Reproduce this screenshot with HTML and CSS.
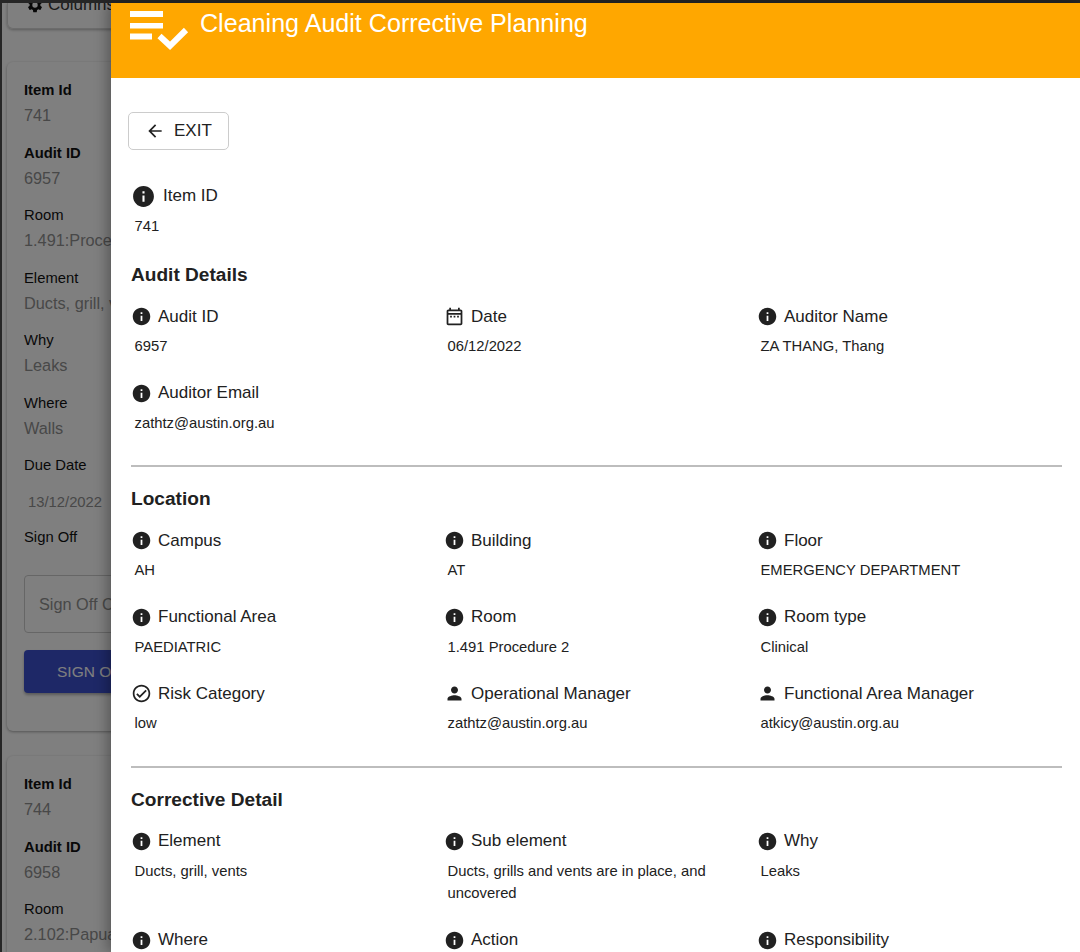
FILE: index.html
```html
<!DOCTYPE html>
<html lang="en">

<head>
    <meta charset="UTF-8">
    <meta name="viewport" content="width=device-width, initial-scale=1.0">
    <title>Cleaning Audit Corrective Planning</title>
    <link rel="stylesheet" href="styles.css">
</head>

<body>
    <svg class="sprites" width="0" height="0">
        <symbol id="i-info" viewBox="0 0 24 24"><path d="M12 2C6.48 2 2 6.48 2 12s4.48 10 10 10 10-4.48 10-10S17.52 2 12 2zm1 15h-2v-6h2v6zm0-8h-2V7h2v2z"/></symbol>
        <symbol id="i-date" viewBox="0 0 24 24"><path d="M7 11h2v2H7v-2zm14-5v14c0 1.1-.9 2-2 2H5c-1.11 0-2-.9-2-2l.01-14c0-1.1.88-2 1.99-2h1V2h2v2h8V2h2v2h1c1.1 0 2 .9 2 2zM5 8h14V6H5v2zm14 12V10H5v10h14zm-4-7h2v-2h-2v2zm-4 0h2v-2h-2v2z"/></symbol>
        <symbol id="i-person" viewBox="0 0 24 24"><path d="M12 12c2.21 0 4-1.79 4-4s-1.79-4-4-4-4 1.79-4 4 1.79 4 4 4zm0 2c-2.67 0-8 1.34-8 4v2h16v-2c0-2.66-5.33-4-8-4z"/></symbol>
        <symbol id="i-check" viewBox="0 0 24 24"><path d="M12 2C6.48 2 2 6.48 2 12s4.48 10 10 10 10-4.48 10-10S17.52 2 12 2zm0 18c-4.41 0-8-3.59-8-8s3.59-8 8-8 8 3.59 8 8-3.59 8-8 8zm4.59-12.42L10 14.17l-2.59-2.58L6 13l4 4 8-8z"/></symbol>
        <symbol id="i-back" viewBox="0 0 24 24"><path d="M20 11H7.83l5.59-5.59L12 4l-8 8 8 8 1.41-1.41L7.83 13H20v-2z"/></symbol>
        <symbol id="i-gear" viewBox="0 0 24 24"><path d="M19.14 12.94c.04-.3.06-.61.06-.94 0-.32-.02-.64-.07-.94l2.03-1.58a.49.49 0 0 0 .12-.61l-1.92-3.32a.49.49 0 0 0-.59-.22l-2.39.96c-.5-.38-1.03-.7-1.62-.94l-.36-2.54a.48.48 0 0 0-.48-.41h-3.84a.48.48 0 0 0-.47.41l-.36 2.54c-.59.24-1.13.57-1.62.94l-2.39-.96a.48.48 0 0 0-.59.22L2.74 8.87a.48.48 0 0 0 .12.61l2.03 1.58c-.05.3-.09.63-.09.94s.02.64.07.94l-2.03 1.58a.49.49 0 0 0-.12.61l1.92 3.32c.12.22.37.29.59.22l2.39-.96c.5.38 1.03.7 1.62.94l.36 2.54c.05.24.24.41.48.41h3.84c.24 0 .44-.17.47-.41l.36-2.54c.59-.24 1.13-.56 1.62-.94l2.39.96c.22.08.47 0 .59-.22l1.92-3.32a.47.47 0 0 0-.12-.61l-2.01-1.58zM12 15.6A3.6 3.6 0 1 1 12 8.4a3.6 3.6 0 0 1 0 7.2z"/></symbol>
    </svg>

    <!-- page behind the drawer -->
    <div class="page">
        <div class="toolbar-card">
            <span class="column-btn"><svg class="icon-gear"><use href="#i-gear"/></svg>Columns</span>
        </div>

        <div class="item-card">
            <div class="field"><div class="field-name bold">Item Id</div><div class="field-value">741</div></div>
            <div class="field"><div class="field-name bold">Audit ID</div><div class="field-value">6957</div></div>
            <div class="field"><div class="field-name">Room</div><div class="field-value">1.491:Procedure 2</div></div>
            <div class="field"><div class="field-name">Element</div><div class="field-value">Ducts, grill, vents</div></div>
            <div class="field"><div class="field-name">Why</div><div class="field-value">Leaks</div></div>
            <div class="field"><div class="field-name">Where</div><div class="field-value">Walls</div></div>
            <div class="field-name">Due Date</div>
            <div class="due-value">13/12/2022</div>
            <div class="field-name">Sign Off</div>
            <div class="signoff-input">Sign Off Comment</div>
            <div class="signoff-btn">SIGN OFF</div>
        </div>

        <div class="item-card">
            <div class="field"><div class="field-name bold">Item Id</div><div class="field-value">744</div></div>
            <div class="field"><div class="field-name bold">Audit ID</div><div class="field-value">6958</div></div>
            <div class="field"><div class="field-name">Room</div><div class="field-value">2.102:Papua</div></div>
        </div>
    </div>

    <div class="backdrop"></div>

    <div class="drawer">
        <header class="drawer-head">
            <svg class="head-icon" viewBox="0 0 60 40">
                <rect x="0" y="0" width="33" height="6"/>
                <rect x="0" y="12" width="33" height="5.5"/>
                <rect x="0" y="22.500" width="22" height="6"/>
                <polyline points="29.500,25 40,34.800 56,19" fill="none" stroke="#fff" stroke-width="6"/>
            </svg>
            <h1 class="head-title">Cleaning Audit Corrective Planning</h1>
        </header>

        <div class="drawer-body">
            <button class="exit-btn"><svg class="icon-back"><use href="#i-back"/></svg>EXIT</button>

            <div class="item-id">
                <div class="label label-big"><svg class="icon-big"><use href="#i-info"/></svg>Item ID</div>
                <div class="value">741</div>
            </div>

            <h2 class="section-title">Audit Details</h2>
            <div class="detail-grid">
                <div><div class="label"><svg class="icon"><use href="#i-info"/></svg>Audit ID</div><div class="value">6957</div></div>
                <div><div class="label"><svg class="icon"><use href="#i-date"/></svg>Date</div><div class="value">06/12/2022</div></div>
                <div><div class="label"><svg class="icon"><use href="#i-info"/></svg>Auditor Name</div><div class="value">ZA THANG, Thang</div></div>
                <div><div class="label"><svg class="icon"><use href="#i-info"/></svg>Auditor Email</div><div class="value">zathtz@austin.org.au</div></div>
            </div>
            <hr class="divider">

            <h2 class="section-title">Location</h2>
            <div class="detail-grid">
                <div><div class="label"><svg class="icon"><use href="#i-info"/></svg>Campus</div><div class="value">AH</div></div>
                <div><div class="label"><svg class="icon"><use href="#i-info"/></svg>Building</div><div class="value">AT</div></div>
                <div><div class="label"><svg class="icon"><use href="#i-info"/></svg>Floor</div><div class="value">EMERGENCY DEPARTMENT</div></div>
                <div><div class="label"><svg class="icon"><use href="#i-info"/></svg>Functional Area</div><div class="value">PAEDIATRIC</div></div>
                <div><div class="label"><svg class="icon"><use href="#i-info"/></svg>Room</div><div class="value">1.491 Procedure 2</div></div>
                <div><div class="label"><svg class="icon"><use href="#i-info"/></svg>Room type</div><div class="value">Clinical</div></div>
                <div><div class="label"><svg class="icon"><use href="#i-check"/></svg>Risk Category</div><div class="value">low</div></div>
                <div><div class="label"><svg class="icon"><use href="#i-person"/></svg>Operational Manager</div><div class="value">zathtz@austin.org.au</div></div>
                <div><div class="label"><svg class="icon"><use href="#i-person"/></svg>Functional Area Manager</div><div class="value">atkicy@austin.org.au</div></div>
            </div>
            <hr class="divider">

            <h2 class="section-title">Corrective Detail</h2>
            <div class="detail-grid">
                <div><div class="label"><svg class="icon"><use href="#i-info"/></svg>Element</div><div class="value">Ducts, grill, vents</div></div>
                <div><div class="label"><svg class="icon"><use href="#i-info"/></svg>Sub element</div><div class="value">Ducts, grills and vents are in place, and uncovered</div></div>
                <div><div class="label"><svg class="icon"><use href="#i-info"/></svg>Why</div><div class="value">Leaks</div></div>
                <div><div class="label"><svg class="icon"><use href="#i-info"/></svg>Where</div></div>
                <div><div class="label"><svg class="icon"><use href="#i-info"/></svg>Action</div></div>
                <div><div class="label"><svg class="icon"><use href="#i-info"/></svg>Responsibility</div></div>
            </div>
        </div>
    </div>
</body>

</html>
```

FILE: styles.css
```css
html, body {
    margin: 0;
    padding: 0;
    height: 952px;
    overflow: hidden;
}

body {
    position: relative;
    background-color: #262626;
    font-family: "Liberation Sans", Arial, sans-serif;
    color: #212121;
}

.sprites {
    position: absolute;
}

/* page behind the drawer */
.page {
    box-sizing: border-box;
    margin: 3px 0 0 2px;
    width: 109px;
    height: 949px;
    background-color: #fff;
    padding: 0 0 0 5px;
    overflow: hidden;
    white-space: nowrap;
}

.toolbar-card {
    height: 25px;
    width: 400px;
    border: 1px solid #d8d8d8;
    border-top: 0;
    border-radius: 0 0 6px 6px;
    box-shadow: 0 1px 3px rgba(0, 0, 0, 0.3);
    margin-bottom: 33px;
}

.column-btn {
    display: flex;
    align-items: center;
    gap: 4px;
    margin-left: 18px;
    height: 3px;
    font-size: 17px;
    color: #333;
}

.icon-gear {
    width: 18px;
    height: 18px;
    fill: #111;
}

.item-card {
    width: 400px;
    height: 669px;
    box-sizing: border-box;
    padding: 16px 0 0 17px;
    border-radius: 6px;
    box-shadow: 0 1px 3px rgba(0, 0, 0, 0.35);
    margin-bottom: 25px;
    overflow: hidden;
}

.field {
    height: 62.500px;
}

.field-name {
    font-size: 14.800px;
    line-height: 24px;
    color: #111;
}

.bold {
    font-weight: bold;
}

.field-value {
    font-size: 16.300px;
    line-height: 26px;
    color: #909090;
}

.due-value {
    font-size: 14.800px;
    line-height: 24px;
    color: #909090;
    padding: 13px 0 0 4px;
    margin-bottom: 11px;
}

.signoff-input {
    box-sizing: border-box;
    height: 58px;
    width: 300px;
    margin-top: 26px;
    padding-left: 14px;
    border: 1px solid #ccc;
    border-radius: 4px;
    font-size: 16.300px;
    line-height: 56px;
    color: #909090;
}

.signoff-btn {
    width: 300px;
    height: 43px;
    margin-top: 17px;
    padding-left: 33px;
    box-sizing: border-box;
    background-color: #3c50cf;
    border-radius: 4px;
    font-size: 15.500px;
    line-height: 43px;
    color: #fff;
    box-shadow: 0 2px 3px rgba(0, 0, 0, 0.3);
}

.backdrop {
    position: absolute;
    top: 3px;
    left: 2px;
    right: 0;
    bottom: 0;
    background-color: rgba(0, 0, 0, 0.5);
}

/* drawer */
.drawer {
    position: absolute;
    top: 3px;
    left: 111px;
    right: 0;
    bottom: 0;
    background-color: #fff;
    box-shadow: -4px 0 12px rgba(0, 0, 0, 0.3);
    overflow: hidden;
}

.drawer-head {
    height: 75px;
    background-color: #ffa700;
    display: flex;
    align-items: flex-start;
    color: #fff;
}

.head-icon {
    width: 60px;
    height: 40px;
    margin: 8px 0 0 19px;
    fill: #fff;
}

.head-title {
    margin: 6px 0 0 10px;
    font-size: 25.100px;
    line-height: 29px;
    font-weight: normal;
}

.drawer-body {
    padding: 34px 18px 0 20px;
}

.exit-btn {
    display: flex;
    align-items: center;
    gap: 9px;
    box-sizing: border-box;
    width: 101px;
    height: 38px;
    margin-left: -3px;
    padding: 0 0 0 16px;
    background-color: #fff;
    border: 1px solid #ccc;
    border-radius: 5px;
    font-family: inherit;
    font-size: 17px;
    color: #212121;
}

.icon-back {
    width: 20px;
    height: 20px;
    fill: #212121;
}

.item-id {
    margin-top: 34px;
    margin-bottom: 26px;
}

.label {
    display: flex;
    align-items: center;
    gap: 6px;
    height: 24px;
    font-size: 17px;
    white-space: nowrap;
}

.label-big {
    gap: 7px;
}

.icon {
    width: 21px;
    height: 21px;
    fill: #212121;
    flex: none;
}

.icon-big {
    width: 25px;
    height: 25px;
    fill: #212121;
    flex: none;
}

.value {
    margin-top: 6.500px;
    padding-left: 3.500px;
    font-size: 14.800px;
    line-height: 22.500px;
}

.section-title {
    margin: 0 0 17.500px;
    font-size: 19.100px;
    line-height: 24px;
    font-weight: bold;
}

.detail-grid {
    display: grid;
    grid-template-columns: repeat(3, 313px);
    row-gap: 23.500px;
}

.divider {
    height: 2px;
    margin: 31px 0 20px;
    border: 0;
    background-color: #bdbdbd;
}
```
